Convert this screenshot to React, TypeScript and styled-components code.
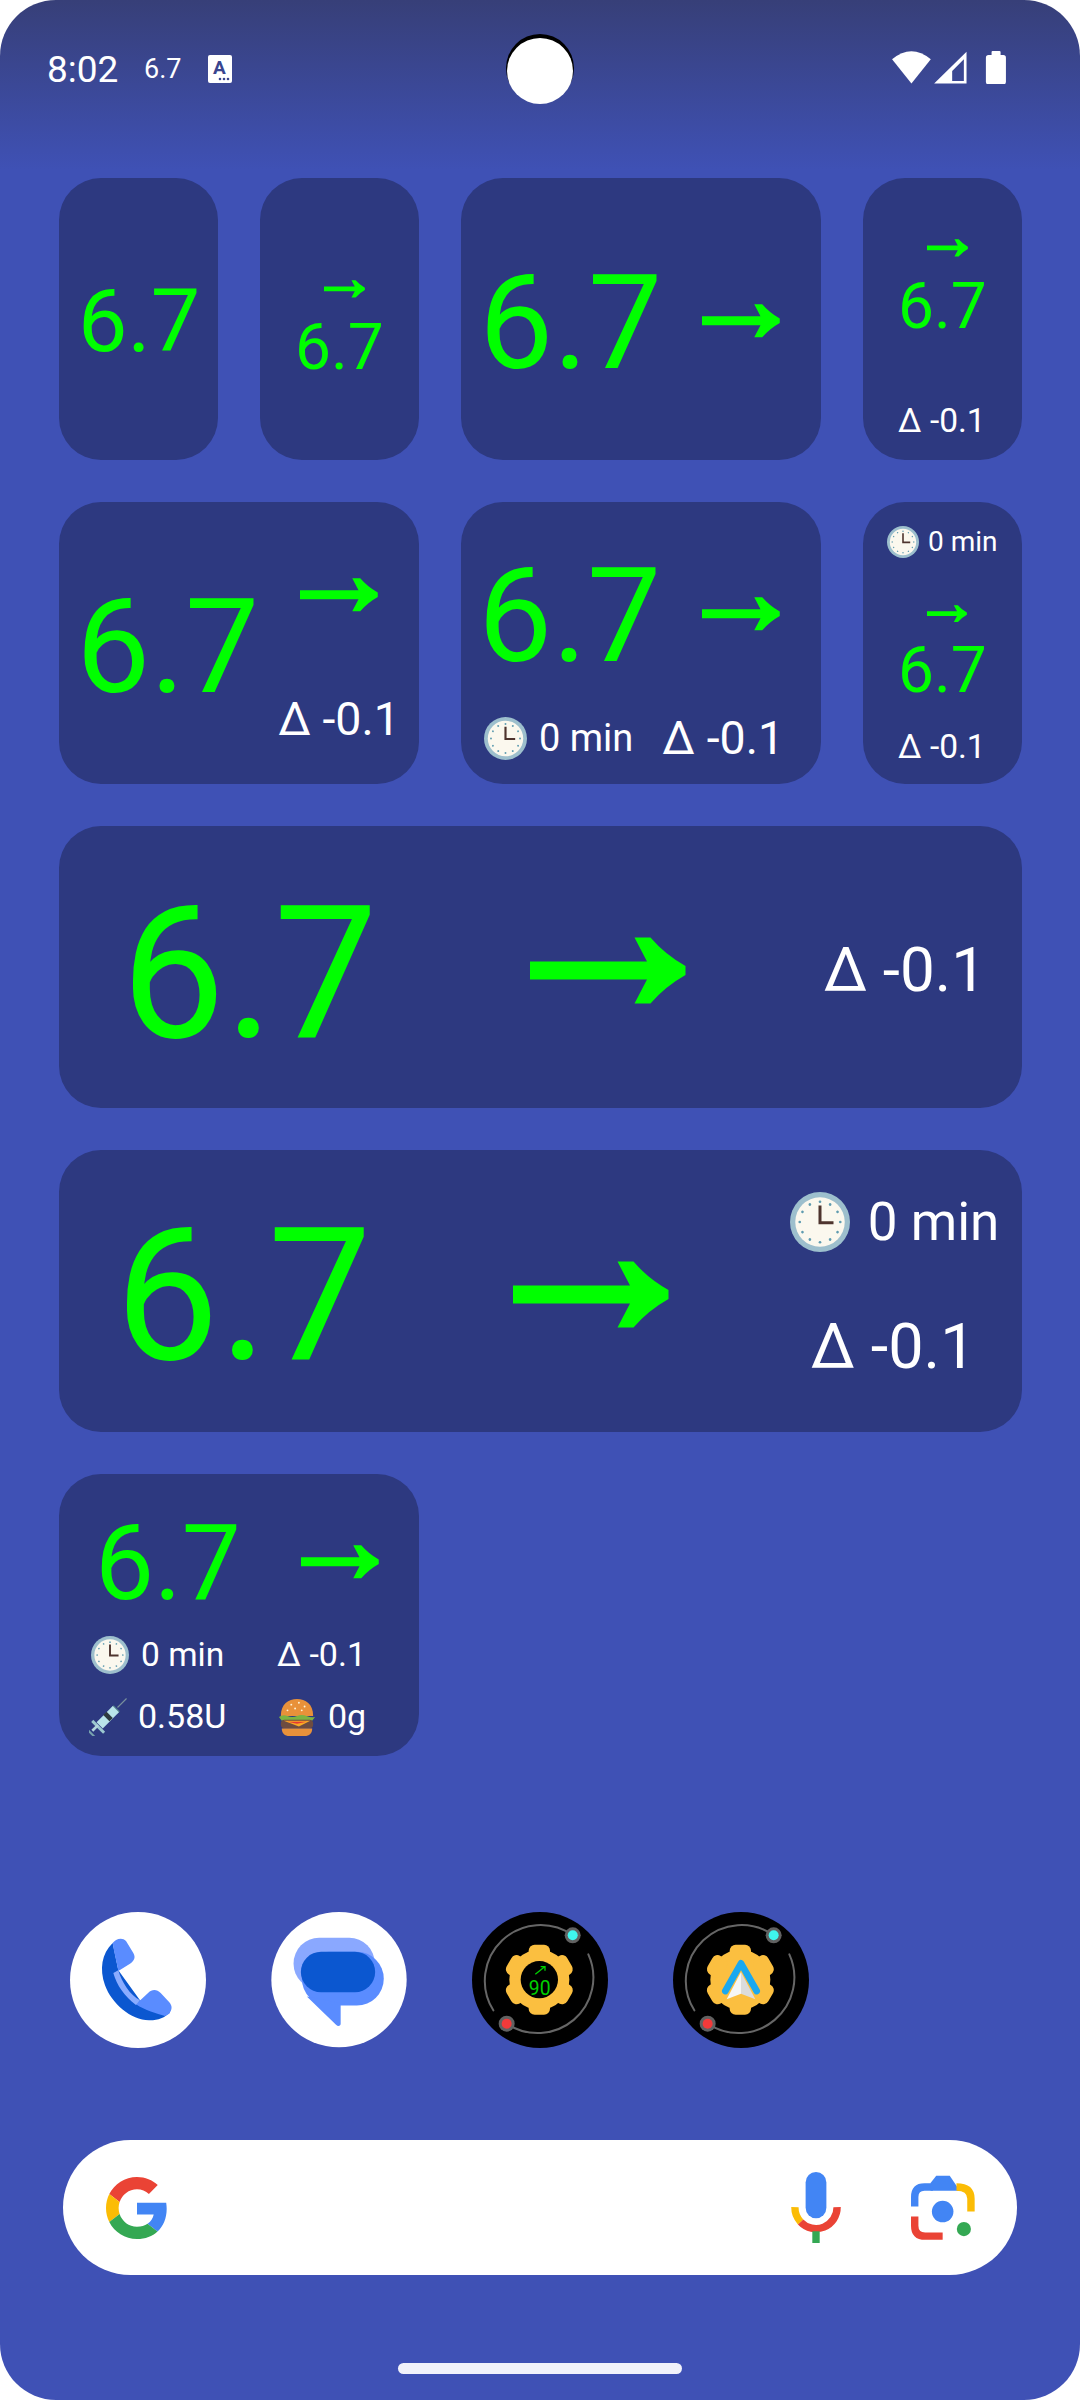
import React from "react";
import styled, { createGlobalStyle, css } from "styled-components";

const Global = createGlobalStyle`
  html, body { margin: 0; padding: 0; background: #fff; }
  body { font-family: Roboto, "Liberation Sans", sans-serif; }
`;

type Place = { $mt?: number; $ml?: number };
const placed = css<Place>`
  margin-top: ${(p) => p.$mt ?? 0}px;
  margin-left: ${(p) => p.$ml ?? 0}px;
  flex: none;
`;

const Screen = styled.main`
  position: relative;
  width: 1080px;
  height: 2400px;
  border-radius: 56px;
  overflow: hidden;
  background: linear-gradient(#373f78 0, #3f51b5 170px, #3f51b5 100%);
  display: flex;
  flex-direction: column;
`;
const StatusBar = styled.header`
  height: 178px;
  padding: 51px 74px 0 47px;
  box-sizing: border-box;
  display: flex;
  align-items: flex-start;
  color: #fff;
  flex: none;
`;
const Time = styled.span`
  font-size: 37px;
  line-height: 34px;
  margin-top: 2px;
  width: 97px;
  flex: none;
`;
const StatusValue = styled.span`
  font-size: 27px;
  line-height: 30px;
  margin-top: 3px;
  width: 64px;
  flex: none;
`;
const StatusRight = styled.div`
  margin-left: auto;
  display: flex;
  align-items: flex-start;
`;
const Camera = styled.div`
  position: absolute;
  left: 506px;
  top: 34px;
  width: 68px;
  height: 68px;
  border-radius: 50%;
  background: #000;
  &::after {
    content: "";
    position: absolute;
    left: 1px;
    top: 4px;
    width: 66px;
    height: 66px;
    border-radius: 50%;
    background: #fff;
  }
`;
const Widgets = styled.div`
  display: grid;
  grid-template-columns: repeat(5, 159px);
  grid-auto-rows: 282px;
  column-gap: 42px;
  row-gap: 42px;
  padding-left: 59px;
  flex: none;
`;
const Card = styled.section<{ $span?: number }>`
  grid-column: span ${(p) => p.$span ?? 1};
  background: #2d3980;
  border-radius: 42px;
  display: flex;
  flex-direction: column;
  align-items: flex-start;
  color: #fff;
`;
const Line = styled.div<Place>`
  ${placed};
  display: flex;
  align-items: flex-start;
`;
const CenterLine = styled(Line)`
  align-items: center;
`;
const Stack = styled.div<Place>`
  ${placed};
  display: flex;
  flex-direction: column;
  align-items: flex-start;
`;
const Reading = styled.span<Place & { $size: number }>`
  ${placed};
  display: block;
  font-size: ${(p) => p.$size}px;
  line-height: 0.711;
  color: #00ff00;
  white-space: nowrap;
`;
const Info = styled.span<Place & { $size: number }>`
  ${placed};
  display: block;
  font-size: ${(p) => p.$size}px;
  line-height: 0.72;
  color: #fff;
  white-space: nowrap;
`;
const ArrowSvg = styled.svg<Place & { $w: number }>`
  ${placed};
  display: block;
  width: ${(p) => p.$w}px;
  height: ${(p) => p.$w * 0.43}px;
`;
const EmojiSvg = styled.svg<Place & { $s: number }>`
  ${placed};
  display: block;
  width: ${(p) => p.$s}px;
  height: ${(p) => p.$s}px;
`;
const InfoGrid = styled.div<Place>`
  ${placed};
  display: grid;
  grid-template-columns: 188px auto;
  grid-auto-rows: 38px;
  row-gap: 24px;
  align-items: center;
`;
const Dock = styled.nav`
  margin: 156px 0 0 70px;
  display: flex;
  gap: 65px;
  flex: none;
`;
const AppIcon = styled.svg`
  display: block;
  width: 136px;
  height: 136px;
  flex: none;
`;
const SearchBar = styled.div`
  margin: 92px 0 0 63px;
  width: 954px;
  height: 135px;
  border-radius: 68px;
  background: #fff;
  display: flex;
  align-items: center;
  padding: 0 42px 0 43px;
  box-sizing: border-box;
  flex: none;
`;
const SearchIcon = styled.svg<{ $w: number; $h: number; $ml?: string; $mt?: string }>`
  display: block;
  width: ${(p) => p.$w}px;
  height: ${(p) => p.$h}px;
  margin-left: ${(p) => p.$ml ?? "0"};
  margin-top: ${(p) => p.$mt ?? "0"};
  flex: none;
`;
const HomeBar = styled.div`
  margin: 88px 0 0 398px;
  width: 284px;
  height: 10.5px;
  border-radius: 6px;
  background: #f1f2fb;
  flex: none;
`;

const Arrow = (p: Place & { $w: number }) => (
  <ArrowSvg viewBox="0 0 156 66" {...p}>
    <path fill="#00ff00" d="M0 24H117L104.5 0H120.5Q135 17 155.5 28.5V37.5Q135 49 120.5 66H104.5L117 42H0Z" />
  </ArrowSvg>
);

const Clock = (p: Place & { $s: number }) => (
  <EmojiSvg viewBox="0 0 40 40" {...p}>
    <circle cx="20" cy="20" r="20" fill="#9dbfcd" />
    <circle cx="20" cy="20" r="16.5" fill="#fbf8ee" />
    {[0, 30, 60, 90, 120, 150, 180, 210, 240, 270, 300, 330].map((a) => (
      <circle key={a} cx="20" cy="6.5" r="0.9" fill="#5f9cb0" transform={`rotate(${a} 20 20)`} />
    ))}
    <path d="M20 9V20.5H29" fill="none" stroke="#4e342e" strokeWidth="2" />
  </EmojiSvg>
);

const Syringe = (p: Place & { $s: number }) => (
  <EmojiSvg viewBox="0 0 40 40" {...p}>
    <path d="M30 10L39.5 0.5" stroke="#78909c" strokeWidth="1.2" />
    <path d="M26 7.5L32.5 14L30 16.5L23.5 10Z" fill="#4f7c8a" />
    <path d="M25 8.5L31.5 15L14.5 32L8 25.5Z" fill="#b9e4ea" />
    <path d="M18.5 14.5L25 21L21.5 24.5L15 18Z" fill="#2f3b40" />
    <path d="M4.5 23L17 35.5L14.8 37.7L2.3 25.2Z" fill="#9cc8d0" />
    <path d="M10.5 29.5L4.5 35.5L2.5 33.5L8.5 27.5Z" fill="#b2d5dc" />
    <path d="M0 33.5L6.5 40H3.5L0 36.5Z" fill="#78a3ae" />
  </EmojiSvg>
);

const Burger = (p: Place & { $s: number }) => (
  <EmojiSvg viewBox="0 0 40 40" {...p}>
    <path d="M3 19C3 6 11 1 20 1S37 6 37 19Z" fill="#e8913a" />
    <g fill="#fff3d6">
      <circle cx="14" cy="7" r="1" />
      <circle cx="22" cy="5" r="1" />
      <circle cx="28" cy="9" r="1" />
      <circle cx="18" cy="11" r="1" />
      <circle cx="25" cy="13" r="1" />
      <circle cx="10" cy="13" r="1" />
    </g>
    <path d="M1 20Q5 17 10 19T20 19T30 19T39 20L36 24H4Z" fill="#7cb342" />
    <rect x="3" y="23" width="34" height="9" rx="4" fill="#6d4c41" />
    <path d="M6 24H34L22 30Z" fill="#f9a825" />
    <path d="M10 25H30L20 27Z" fill="#e53935" />
    <path d="M4 32H36C36 37 33 40 28 40H12C7 40 4 37 4 32Z" fill="#e8913a" />
  </EmojiSvg>
);

const Dial = ({ children }: { children?: React.ReactNode }) => (
  <AppIcon viewBox="-204 -204 408 408">
    <circle r="204" fill="#000" />
    <g fill="none" stroke="#666" strokeWidth="6" strokeLinecap="round">
      <path d="M-140 91A167 167 0 0 1 98 -134" />
      <path d="M145 -77A167 167 0 0 1 -100 131" />
    </g>
    <circle cx="98" cy="-134" r="24" fill="#616161" />
    <circle cx="98" cy="-134" r="15" fill="#3ff6ee" />
    <circle cx="-100" cy="131" r="24" fill="#616161" />
    <circle cx="-100" cy="131" r="15" fill="#f23a3a" />
    <g fill="#fbbf40" transform="translate(-2 -1)">
      <circle r="90" />
      {[0, 60, 120, 180, 240, 300].map((a) => (
        <rect key={a} x="-32" y="-105" width="64" height="50" rx="18" transform={`rotate(${a})`} />
      ))}
    </g>
    {children}
  </AppIcon>
);

export default function App() {
  return (
    <Screen>
      <Global />
      <StatusBar>
        <Time>8:02</Time>
        <StatusValue>6.7</StatusValue>
        <SearchIcon $w={24} $h={28} $mt="4px" viewBox="0 0 24 28">
          <rect width="24" height="28" rx="2" fill="#fff" />
          <text x="11.5" y="19" fontSize="19" fontWeight="700" fontFamily="Roboto" textAnchor="middle" fill="#39458f">A</text>
          <g fill="#39458f">
            <circle cx="12" cy="24" r="1.3" />
            <circle cx="16" cy="24" r="1.3" />
            <circle cx="20" cy="24" r="1.3" />
          </g>
        </SearchIcon>
        <StatusRight>
          <SearchIcon $w={114} $h={33.4} viewBox="97 93 341 100">
            <path fill="#fff" d="M97 118Q155 70 213 118L155 190Z" />
            <path fill="#fff" fillRule="evenodd" d="M223 190L320 95V190ZM277 183H312V118L277 153Z" />
            <rect x="378" y="105" width="60" height="88" rx="8" fill="#fff" />
            <rect x="395" y="93" width="27" height="15" rx="3" fill="#fff" />
          </SearchIcon>
        </StatusRight>
      </StatusBar>
      <Camera />
      <Widgets>
        <Card>
          <Reading $size={88} $mt={112} $ml={19}>6.7</Reading>
        </Card>
        <Card>
          <Arrow $w={41} $mt={102} $ml={64} />
          <Reading $size={64} $mt={27} $ml={35}>6.7</Reading>
        </Card>
        <Card $span={2}>
          <Line $mt={99}>
            <Reading $size={132} $ml={18}>6.7</Reading>
            <Arrow $w={78} $mt={27} $ml={40} />
          </Line>
        </Card>
        <Card>
          <Arrow $w={41} $mt={61} $ml={64} />
          <Reading $size={64} $mt={27} $ml={35}>6.7</Reading>
          <Info $size={33.5} $mt={80} $ml={35}>Δ -0.1</Info>
        </Card>

        <Card $span={2}>
          <Line>
            <Reading $size={132} $mt={99} $ml={17}>6.7</Reading>
            <Stack $mt={76} $ml={19}>
              <Arrow $w={78} $ml={22} />
              <Info $size={46.5} $mt={91}>Δ -0.1</Info>
            </Stack>
          </Line>
        </Card>
        <Card $span={2}>
          <Line $mt={68}>
            <Reading $size={132} $ml={17}>6.7</Reading>
            <Arrow $w={78} $mt={27} $ml={41} />
          </Line>
          <CenterLine $mt={53}>
            <Clock $s={43} $ml={23} />
            <Info $size={38} $ml={12}>0 min</Info>
            <Info $size={46.5} $ml={29}>Δ -0.1</Info>
          </CenterLine>
        </Card>
        <Card>
          <CenterLine $mt={24}>
            <Clock $s={32} $ml={24} />
            <Info $size={28} $ml={9}>0 min</Info>
          </CenterLine>
          <Arrow $w={40} $mt={47} $ml={64} />
          <Reading $size={64} $mt={26} $ml={35}>6.7</Reading>
          <Info $size={33.5} $mt={41} $ml={35}>Δ -0.1</Info>
        </Card>

        <Card $span={5}>
          <Line>
            <Reading $size={185} $mt={82} $ml={62}>6.7</Reading>
            <Arrow $w={156} $mt={111} $ml={152} />
            <Info $size={62} $mt={122} $ml={138}>Δ -0.1</Info>
          </Line>
        </Card>

        <Card $span={5}>
          <Line>
            <Reading $size={185} $mt={80} $ml={56}>6.7</Reading>
            <Arrow $w={156} $mt={111} $ml={141} />
            <Stack $mt={42} $ml={121}>
              <CenterLine>
                <Clock $s={60} />
                <Info $size={53} $ml={18}>0 min</Info>
              </CenterLine>
              <Info $size={63} $mt={72} $ml={21}>Δ -0.1</Info>
            </Stack>
          </Line>
        </Card>

        <Card $span={2}>
          <Line $mt={53}>
            <Reading $size={105} $ml={36}>6.7</Reading>
            <Arrow $w={78} $mt={18} $ml={60} />
          </Line>
          <InfoGrid $mt={34} $ml={30}>
            <CenterLine>
              <Clock $s={38} $ml={2} />
              <Info $size={33.5} $ml={12}>0 min</Info>
            </CenterLine>
            <Info $size={34}>Δ -0.1</Info>
            <CenterLine>
              <Syringe $s={38} />
              <Info $size={34} $ml={11}>0.58U</Info>
            </CenterLine>
            <CenterLine>
              <Burger $s={38} $ml={1} />
              <Info $size={34} $ml={12}>0g</Info>
            </CenterLine>
          </InfoGrid>
        </Card>
      </Widgets>

      <Dock>
        <AppIcon viewBox="60 35 408 408">
          <circle cx="264" cy="239" r="204" fill="#fff" />
          <path fill="#0b57d0" d="M188 128C155 160 148 205 165 255C185 310 245 362 300 360C325 360 345 352 360 335L270 300L205 210Z" />
          <path fill="#5a8cff" d="M188 128C195 118 215 108 228 122L250 158C258 172 252 182 240 190L205 212C200 185 192 155 188 128Z" />
          <path fill="#5a8cff" d="M258 312L295 277C305 267 320 265 332 278L358 306C368 318 366 328 358 340L345 347C320 340 285 330 258 312Z" />
          <path fill="#8aacff" d="M190 218L205 210C215 245 240 285 270 300L258 314C225 290 200 255 190 218Z" />
        </AppIcon>
        <AppIcon viewBox="662 35 410 410">
          <circle cx="867" cy="239" r="204" fill="#fff" />
          <rect x="730" y="113" width="245" height="155" rx="77" fill="#8aa8ff" />
          <rect x="755" y="155" width="247" height="162" rx="81" fill="#5a8cff" />
          <path fill="#5a8cff" d="M770 290L858 375C864 381 872 379 872 372V310Z" />
          <rect x="752" y="155" width="224" height="122" rx="61" fill="#0b57d0" />
        </AppIcon>
        <Dial>
          <circle cx="-2" cy="-1" r="56" fill="#000" />
          <path d="M-14 -17L14 -40M2 -40H15V-28" fill="none" stroke="#00d000" strokeWidth="4" />
          <text x="-1" y="44" fontSize="58" fontFamily="Roboto" textAnchor="middle" fill="#00d000">90</text>
        </Dial>
        <Dial>
          <path d="M-47 33L0 -50L47 33" fill="none" stroke="#1aa8ef" strokeWidth="20" strokeLinecap="round" strokeLinejoin="round" />
          <path d="M0 -24L43 58L0 41Z" fill="#dcdcdc" />
          <path d="M0 -24L-43 58L0 41Z" fill="#f6f6f6" />
        </Dial>
      </Dock>

      <SearchBar>
        <SearchIcon $w={62} $h={62} viewBox="0 0 48 48">
          <path fill="#EA4335" d="M24 9.5c3.54 0 6.71 1.22 9.21 3.6l6.85-6.85C35.9 2.38 30.47 0 24 0 14.62 0 6.51 5.38 2.56 13.22l7.98 6.19C12.43 13.72 17.74 9.5 24 9.5z" />
          <path fill="#4285F4" d="M46.98 24.55c0-1.57-.15-3.09-.38-4.55H24v9.02h12.94c-.58 2.96-2.26 5.48-4.78 7.18l7.73 6c4.51-4.18 7.09-10.36 7.09-17.65z" />
          <path fill="#FBBC05" d="M10.53 28.59c-.48-1.45-.76-2.99-.76-4.59s.27-3.14.76-4.59l-7.98-6.19C.92 16.46 0 20.12 0 24c0 3.88.92 7.54 2.56 10.78l7.97-6.19z" />
          <path fill="#34A853" d="M24 48c6.48 0 11.93-2.13 15.89-5.81l-7.73-6c-2.15 1.45-4.92 2.3-8.16 2.3-6.26 0-11.57-4.22-13.47-9.91l-7.98 6.19C6.51 42.62 14.62 48 24 48z" />
        </SearchIcon>
        <SearchIcon $w={50} $h={71} $ml="auto" viewBox="97 128 148 212">
          <rect x="140" y="128" width="62" height="138" rx="31" fill="#4285f4" />
          <path d="M108 233A63 63 0 0 0 125 277" fill="none" stroke="#fbbc05" strokeWidth="22" />
          <path d="M125 277A63 63 0 0 0 234 233" fill="none" stroke="#ea4335" strokeWidth="22" />
          <rect x="160" y="305" width="22" height="35" fill="#34a853" />
        </SearchIcon>
        <SearchIcon $w={64} $h={65} $ml="70px" viewBox="455 135 190 192">
          <path d="M466 228V200Q466 170 495 170H520" fill="none" stroke="#4285f4" strokeWidth="22" />
          <path d="M513 158L530 137H570L600 181H513Z" fill="#4285f4" />
          <path d="M590 170Q633 170 633 205V243" fill="none" stroke="#fbbc05" strokeWidth="22" />
          <path d="M466 258V285Q466 316 497 316H549" fill="none" stroke="#ea4335" strokeWidth="22" />
          <circle cx="549" cy="243" r="32" fill="#4285f4" />
          <circle cx="612" cy="295" r="21" fill="#34a853" />
        </SearchIcon>
      </SearchBar>
      <HomeBar />
    </Screen>
  );
}
